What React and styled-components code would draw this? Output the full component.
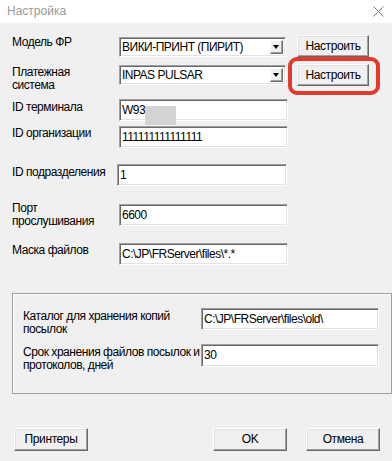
import React from 'react'
import styled, { createGlobalStyle } from 'styled-components'

const Global = createGlobalStyle`
  html, body {
    margin: 0;
    padding: 0;
    background: #f0f0f0;
  }
  * { box-sizing: border-box; }
`

const Window = styled.div`
  width: 392px;
  height: 461px;
  background: #f0f0f0;
  display: flex;
  flex-direction: column;
  font-family: "Liberation Sans", Arial, sans-serif;
  font-size: 12px;
  color: #000;
  overflow: hidden;
`

const TitleBar = styled.div`
  height: 23px;
  background: #fff;
  display: flex;
  align-items: center;
  justify-content: space-between;
  padding: 0 8px 0 7px;
  flex-shrink: 0;
`

const Title = styled.span`
  color: #999;
  font-size: 12px;
  line-height: 14px;
  margin-top: -1px;
`

const Content = styled.div`
  padding: 0 12px;
  display: flex;
  flex-direction: column;
`

const Row = styled.div`
  display: flex;
  align-items: flex-start;
  height: ${p => p.$h || 22}px;
  margin-top: ${p => p.$top}px;
`

const Label = styled.div`
  width: ${p => p.$w || 107}px;
  flex-shrink: 0;
  margin-top: ${p => p.$shift || 0}px;
  line-height: 13px;
  letter-spacing: -0.45px;
  white-space: pre;
`

const Field = styled.div`
  position: relative;
  width: ${p => p.$w || 169}px;
  height: ${p => p.$h || 22}px;
  margin-left: ${p => p.$offset || 0}px;
  margin-top: ${p => p.$shift || 0}px;
  background: #fff;
  border: 1px solid;
  border-color: #a0a0a0 #fff #fff #a0a0a0;
  box-shadow: inset 1px 1px 0 #696969, inset -1px -1px 0 #e3e3e3;
  display: flex;
  align-items: center;
  padding: 0 2px 1px 2px;
  letter-spacing: -0.5px;
  white-space: nowrap;
`

const Combo = styled(Field)`
  justify-content: space-between;
  padding-right: 2px;
`

const ArrowBox = styled.div`
  width: 13px;
  height: 14px;
  background: #f0f0f0;
  border: 1px solid;
  border-color: #fff #696969 #696969 #fff;
  box-shadow: inset -1px -1px 0 #a0a0a0;
  display: flex;
  align-items: center;
  justify-content: center;
  margin-top: 1px;
`

const Arrow = styled.div`
  width: 0;
  height: 0;
  border-left: 3.5px solid transparent;
  border-right: 3.5px solid transparent;
  border-top: 4px solid #000;
  margin-left: -1px;
`

const Blur = styled.div`
  position: absolute;
  left: 25px;
  top: 6px;
  width: 31px;
  height: 19px;
  background: #d3d3d3;
`

const Button = styled.button`
  width: ${p => p.$w || 74}px;
  height: ${p => p.$h || 23}px;
  margin-left: ${p => p.$offset || 0}px;
  background: #f0f0f0;
  border: 1px solid;
  border-color: #fff #696969 #696969 #fff;
  box-shadow: inset -1px -1px 0 #a0a0a0, inset 1px 1px 0 #e3e3e3;
  font-family: inherit;
  font-size: 12px;
  letter-spacing: -0.4px;
  color: #000;
  padding: 0 0 1px 0;
  cursor: default;
`

const Highlight = styled.div`
  position: relative;
  margin-left: ${p => p.$offset || 0}px;

  &::after {
    content: "";
    position: absolute;
    left: -9px;
    right: -11px;
    top: -7px;
    bottom: -9px;
    border: 4px solid #e33a2e;
    border-radius: 9px;
    pointer-events: none;
  }
`

const Group = styled.div`
  margin-top: 28px;
  width: 380px;
  height: 101px;
  border: 1px solid #a0a0a0;
  box-shadow: inset 1px 1px 0 #fff;
  padding: 0 10px;
  display: flex;
  flex-direction: column;
`

const Footer = styled.div`
  margin-top: 34px;
  display: flex;
  justify-content: space-between;
  padding-left: 2px;
`

const FooterRight = styled.div`
  display: flex;
  gap: 19px;
`

const CloseIcon = () => (
  <svg width="11" height="11" viewBox="0 0 11 11">
    <path d="M0.5 0.5 L10.5 10.5 M10.5 0.5 L0.5 10.5" stroke="#7a7a7a" strokeWidth="1" fill="none" />
  </svg>
)

const App = () => {
  return (
    <Window>
      <Global />
      <TitleBar>
        <Title>Настройка</Title>
        <CloseIcon />
      </TitleBar>
      <Content>
        <Row $top={12}>
          <Label $shift={1}>Модель ФР</Label>
          <Combo $w={167} $h={20} $shift={2}>
            <span>ВИКИ-ПРИНТ (ПИРИТ)</span>
            <ArrowBox><Arrow /></ArrowBox>
          </Combo>
          <Button $w={72} $h={22} $offset={11}>Настроить</Button>
        </Row>
        <Row $top={7}>
          <Label $shift={2}>{'Платежная\nсистема'}</Label>
          <Combo $w={167} $h={20} $shift={1}>
            <span>INPAS PULSAR</span>
            <ArrowBox><Arrow /></ArrowBox>
          </Combo>
          <Highlight $offset={11}>
            <Button $w={72} $h={22}>Настроить</Button>
          </Highlight>
        </Row>
        <Row $top={13}>
          <Label $shift={2}>ID терминала</Label>
          <Field>
            W93
            <Blur />
          </Field>
        </Row>
        <Row $top={5}>
          <Label $shift={1}>ID организации</Label>
          <Field>111111111111111</Field>
        </Row>
        <Row $top={16}>
          <Label $shift={2}>ID подразделения</Label>
          <Field $w={170} $offset={-2}>1</Field>
        </Row>
        <Row $top={18}>
          <Label $shift={-2}>{'Порт\nпрослушивания'}</Label>
          <Field>6600</Field>
        </Row>
        <Row $top={17}>
          <Label $shift={1}>Маска файлов</Label>
          <Field>C:\JP\FRServer\files\*.*</Field>
        </Row>
        <Group>
          <Row $top={14}>
            <Label $w={178} $shift={2}>{'Каталог для хранения копий\nпосылок'}</Label>
            <Field $w={178}>C:\JP\FRServer\files\old\</Field>
          </Row>
          <Row $top={14} $h={23}>
            <Label $w={178} $shift={2}>{'Срок хранения файлов посылок и\nпротоколов, дней'}</Label>
            <Field $w={178} $h={23}>30</Field>
          </Row>
        </Group>
        <Footer>
          <Button>Принтеры</Button>
          <FooterRight>
            <Button>OK</Button>
            <Button>Отмена</Button>
          </FooterRight>
        </Footer>
      </Content>
    </Window>
  )
}

export default App
